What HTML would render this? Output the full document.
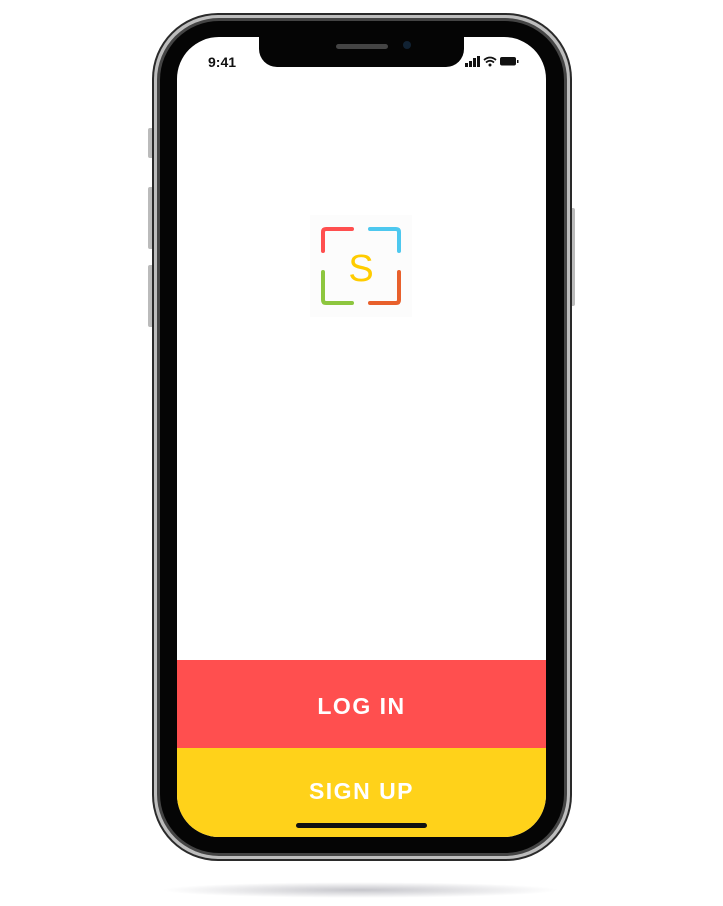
<!DOCTYPE html>
<html><head><style>
body{margin:0;width:723px;height:906px;background:#fff;position:relative;overflow:hidden;font-family:"Liberation Sans",sans-serif}
.a{position:absolute}
</style></head><body>
<div class="a" style="left:160px;top:882px;width:400px;height:16px;border-radius:50%;background:radial-gradient(ellipse at center,rgba(150,150,160,.55),rgba(200,200,210,0) 70%)"></div>
<div class="a" style="left:148px;top:128px;width:6px;height:30px;background:#bbb;border-radius:2px"></div>
<div class="a" style="left:148px;top:187px;width:6px;height:62px;background:#bbb;border-radius:2px"></div>
<div class="a" style="left:148px;top:265px;width:6px;height:62px;background:#bbb;border-radius:2px"></div>
<div class="a" style="left:569px;top:208px;width:6px;height:98px;background:#bbb;border-radius:2px"></div>
<div class="a" style="left:152px;top:13px;width:420px;height:848px;border-radius:66px;background:#2a2a2a"></div>
<div class="a" style="left:154px;top:15px;width:416px;height:844px;border-radius:64px;background:#bdbdbd"></div>
<div class="a" style="left:157px;top:18px;width:410px;height:838px;border-radius:62px;background:#444"></div>
<div class="a" style="left:160px;top:21px;width:404px;height:832px;border-radius:59px;background:#050505"></div>
<div class="a" style="left:177px;top:37px;width:369px;height:800px;border-radius:42px;background:#fff;overflow:hidden">
  <div class="a" style="left:0;top:623px;width:369px;height:88px;background:#ff4f4f;color:#fff;font-weight:bold;font-size:23px;letter-spacing:1.5px;text-align:center;line-height:92px">LOG IN</div>
  <div class="a" style="left:0;top:711px;width:369px;height:89px;background:#ffd21a;color:#fff;font-weight:bold;font-size:23px;letter-spacing:1.5px;text-align:center;line-height:86px">SIGN UP</div>
  <div class="a" style="left:119px;top:786px;width:131px;height:5px;border-radius:3px;background:#111"></div>
  <div class="a" style="left:31px;top:17px;font-size:14px;font-weight:bold;color:#111">9:41</div>
  <svg class="a" style="left:287px;top:18px" width="56" height="14">
    <rect x="1" y="8" width="3" height="4" fill="#111"/><rect x="5" y="6" width="3" height="6" fill="#111"/><rect x="9" y="3" width="3" height="9" fill="#111"/><rect x="13" y="1" width="3" height="11" fill="#111"/>
    <path d="M20 5 Q26 0 32 5 M22 7.5 Q26 4 30 7.5" stroke="#111" stroke-width="1.8" fill="none"/><circle cx="26" cy="10" r="1.5" fill="#111"/>
    <rect x="36" y="2" width="16" height="8.5" rx="2" fill="#111"/><rect x="53" y="5" width="1.5" height="3" fill="#111"/>
  </svg>
</div>
<div class="a" style="left:259px;top:37px;width:205px;height:30px;background:#050505;border-radius:0 0 18px 18px"></div>
<div class="a" style="left:336px;top:44px;width:52px;height:5px;border-radius:3px;background:#444"></div>
<div class="a" style="left:403px;top:41px;width:8px;height:8px;border-radius:50%;background:#123"></div>
<div class="a" style="left:310px;top:215px;width:102px;height:102px;background:#fcfcfc"></div>
<svg class="a" style="left:310px;top:215px" width="102" height="102">
  <g fill="none" stroke-width="4" stroke-linecap="round" stroke-linejoin="round">
    <path d="M13 36 V17 Q13 14 16 14 H42" stroke="#ff4f4f"/>
    <path d="M60 14 H86 Q89 14 89 17 V36" stroke="#4dc8ef"/>
    <path d="M13 57 V85 Q13 88 16 88 H42" stroke="#8dc63f"/>
    <path d="M60 88 H86 Q89 88 89 85 V57" stroke="#e8602c"/>
  </g>
  <text x="51" y="66" text-anchor="middle" font-family="Liberation Sans,sans-serif" font-size="38" fill="#ffcc00">S</text>
</svg>
</body></html>
